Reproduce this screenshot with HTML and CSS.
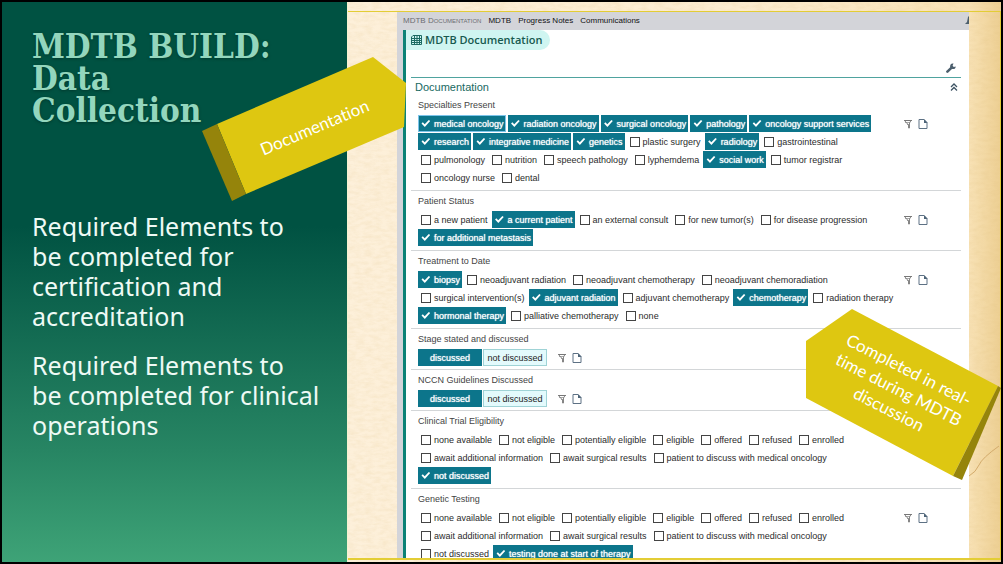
FILE: index.html
```html
<!DOCTYPE html>
<html lang="en">
<head>
<meta charset="utf-8">
<meta name="viewport" content="width=device-width, initial-scale=1">
<title>MDTB Build: Data Collection</title>
<link rel="stylesheet" href="styles.css">
</head>
<body>
<svg class="sprite" aria-hidden="true">
  <symbol id="funnel" viewBox="0 0 10 10"><path d="M1 1.500h8" stroke="#777" fill="none"/><path d="M2 3.500h5M4 5.500h3" stroke="#aaa" fill="none"/><path d="M1.500 1.500l4 4.500v3h1V4L8 1.500" fill="none" stroke="#858585"/></symbol>
  <symbol id="page" viewBox="0 0 10 10"><path d="M1 .5h5l3 3v6H1z" fill="#fff" stroke="#5d7184"/><path d="M6 0v4h3.500z" fill="#4d6478"/></symbol>
  <symbol id="wrench" viewBox="0 0 10 10"><path d="M1.400 8.600L5.600 4.600" stroke="#4c5f6d" stroke-width="2.600" stroke-linecap="round"/><path d="M7.500.5A2.800 2.800 0 1 0 9.700 3.400L7.800 4 6.600 2.700z" fill="#4c5f6d"/></symbol>
</svg>
<main class="slide">
  <section class="intro">
    <h1 class="title">MDTB BUILD:<br>Data<br>Collection</h1>
    <div class="points">
      <p>Required Elements to<br>be completed for<br>certification and<br>accreditation</p>
      <p>Required Elements to<br>be completed for clinical<br>operations</p>
    </div>
  </section>

  <section class="paper">
    <svg class="grain" aria-hidden="true"><filter id="fibre"><feTurbulence type="fractalNoise" baseFrequency=".12 .3" numOctaves="3" seed="4"/><feColorMatrix values="0 0 0 0 .7  0 0 0 0 .48  0 0 0 0 .18  .9 0 0 0 -.3"/></filter><rect width="100%" height="100%" filter="url(#fibre)"/></svg>
    <svg class="crease" viewBox="0 0 32 40" aria-hidden="true"><path d="M1 32Q8 28 11 21T31 2" fill="none" stroke="#d3ab6c"/></svg>
    <div class="frame">
      <div class="app">
        <nav class="tabs">
          <span class="crumb">MDTB Documentation</span>
          <a href="#mdtb">MDTB</a>
          <a href="#notes">Progress Notes</a>
          <a href="#comms">Communications</a>
          <svg class="tabs-tool" viewBox="0 0 4 9" aria-hidden="true"><path d="M4 0v8H0l2-2 1-5z" fill="#4c5f6d"/></svg>
        </nav>
        <div class="sheet">
          <h2 class="pill"><svg viewBox="0 0 11 10" aria-hidden="true"><path d="M2 .5h8.500v9H.5V2zM.5 3.500h10M.5 5.500h10M.5 7.500h10M3.500.5v9M6 .5v9M8.500.5v9" fill="none" stroke="#1c6a62"/></svg>MDTB Documentation</h2>
          <div class="toolbar"><svg class="icon" aria-hidden="true"><use href="#wrench"/></svg></div>
          <div class="form">
            <header class="form-head"><h3>Documentation</h3><svg class="fold" viewBox="0 0 8 8" aria-hidden="true"><path d="M1 4l3-3 3 3M1 7.500l3-3 3 3" fill="none" stroke="#3d5363" stroke-width="1.300"/></svg></header>

            <fieldset class="group"><legend>Specialties Present</legend>
              <div class="row"><div class="options">
                <label class="opt focus"><input type="checkbox" checked>medical oncology</label>
                <label class="opt"><input type="checkbox" checked>radiation oncology</label>
                <label class="opt"><input type="checkbox" checked>surgical oncology</label>
                <label class="opt"><input type="checkbox" checked>pathology</label>
                <label class="opt"><input type="checkbox" checked>oncology support services</label>
                <label class="opt"><input type="checkbox" checked>research</label>
                <label class="opt"><input type="checkbox" checked>integrative medicine</label>
                <label class="opt"><input type="checkbox" checked>genetics</label>
                <label class="opt"><input type="checkbox">plastic surgery</label>
                <label class="opt"><input type="checkbox" checked>radiology</label>
                <label class="opt"><input type="checkbox">gastrointestinal</label>
                <label class="opt"><input type="checkbox">pulmonology</label>
                <label class="opt"><input type="checkbox">nutrition</label>
                <label class="opt"><input type="checkbox">speech pathology</label>
                <label class="opt"><input type="checkbox">lyphemdema</label>
                <label class="opt"><input type="checkbox" checked>social work</label>
                <label class="opt"><input type="checkbox">tumor registrar</label>
                <label class="opt"><input type="checkbox">oncology nurse</label>
                <label class="opt"><input type="checkbox">dental</label>
              </div><div class="tools"><svg class="icon" aria-hidden="true"><use href="#funnel"/></svg><svg class="icon" aria-hidden="true"><use href="#page"/></svg></div></div>
            </fieldset>

            <fieldset class="group"><legend>Patient Status</legend>
              <div class="row"><div class="options">
                <label class="opt"><input type="checkbox">a new patient</label>
                <label class="opt"><input type="checkbox" checked>a current patient</label>
                <label class="opt"><input type="checkbox">an external consult</label>
                <label class="opt"><input type="checkbox">for new tumor(s)</label>
                <label class="opt"><input type="checkbox">for disease progression</label>
                <label class="opt"><input type="checkbox" checked>for additional metastasis</label>
              </div><div class="tools"><svg class="icon" aria-hidden="true"><use href="#funnel"/></svg><svg class="icon" aria-hidden="true"><use href="#page"/></svg></div></div>
            </fieldset>

            <fieldset class="group"><legend>Treatment to Date</legend>
              <div class="row"><div class="options">
                <label class="opt"><input type="checkbox" checked>biopsy</label>
                <label class="opt"><input type="checkbox">neoadjuvant radiation</label>
                <label class="opt"><input type="checkbox">neoadjuvant chemotherapy</label>
                <label class="opt"><input type="checkbox">neoadjuvant chemoradiation</label>
                <label class="opt"><input type="checkbox">surgical intervention(s)</label>
                <label class="opt"><input type="checkbox" checked>adjuvant radiation</label>
                <label class="opt"><input type="checkbox">adjuvant chemotherapy</label>
                <label class="opt"><input type="checkbox" checked>chemotherapy</label>
                <label class="opt"><input type="checkbox">radiation therapy</label>
                <label class="opt"><input type="checkbox" checked>hormonal therapy</label>
                <label class="opt"><input type="checkbox">palliative chemotherapy</label>
                <label class="opt"><input type="checkbox">none</label>
              </div><div class="tools"><svg class="icon" aria-hidden="true"><use href="#funnel"/></svg><svg class="icon" aria-hidden="true"><use href="#page"/></svg></div></div>
            </fieldset>

            <fieldset class="group compact"><legend>Stage stated and discussed</legend>
              <div class="choice"><button type="button" class="toggle on" aria-pressed="true">discussed</button><button type="button" class="toggle" aria-pressed="false">not discussed</button><div class="tools"><svg class="icon" aria-hidden="true"><use href="#funnel"/></svg><svg class="icon" aria-hidden="true"><use href="#page"/></svg></div></div>
            </fieldset>

            <fieldset class="group compact"><legend>NCCN Guidelines Discussed</legend>
              <div class="choice"><button type="button" class="toggle on" aria-pressed="true">discussed</button><button type="button" class="toggle" aria-pressed="false">not discussed</button><div class="tools"><svg class="icon" aria-hidden="true"><use href="#funnel"/></svg><svg class="icon" aria-hidden="true"><use href="#page"/></svg></div></div>
            </fieldset>

            <fieldset class="group"><legend>Clinical Trial Eligibility</legend>
              <div class="row"><div class="options">
                <label class="opt"><input type="checkbox">none available</label>
                <label class="opt"><input type="checkbox">not eligible</label>
                <label class="opt"><input type="checkbox">potentially eligible</label>
                <label class="opt"><input type="checkbox">eligible</label>
                <label class="opt"><input type="checkbox">offered</label>
                <label class="opt"><input type="checkbox">refused</label>
                <label class="opt"><input type="checkbox">enrolled</label>
                <label class="opt"><input type="checkbox">await additional information</label>
                <label class="opt"><input type="checkbox">await surgical results</label>
                <label class="opt"><input type="checkbox">patient to discuss with medical oncology</label>
                <label class="opt"><input type="checkbox" checked>not discussed</label>
              </div></div>
            </fieldset>

            <fieldset class="group"><legend>Genetic Testing</legend>
              <div class="row"><div class="options">
                <label class="opt"><input type="checkbox">none available</label>
                <label class="opt"><input type="checkbox">not eligible</label>
                <label class="opt"><input type="checkbox">potentially eligible</label>
                <label class="opt"><input type="checkbox">eligible</label>
                <label class="opt"><input type="checkbox">offered</label>
                <label class="opt"><input type="checkbox">refused</label>
                <label class="opt"><input type="checkbox">enrolled</label>
                <label class="opt"><input type="checkbox">await additional information</label>
                <label class="opt"><input type="checkbox">await surgical results</label>
                <label class="opt"><input type="checkbox">patient to discuss with medical oncology</label>
                <label class="opt"><input type="checkbox">not discussed</label>
                <label class="opt"><input type="checkbox" checked>testing done at start of therapy</label>
              </div><div class="tools"><svg class="icon" aria-hidden="true"><use href="#funnel"/></svg><svg class="icon" aria-hidden="true"><use href="#page"/></svg></div></div>
            </fieldset>
          </div>
        </div>
      </div>
    </div>
  </section>

  <svg class="callout callout-doc" viewBox="0 0 206 146">
    <path d="M15 68L171 1l33 26-2 44L44 138z" fill="#dec711"/>
    <path d="M0 75l15-7 29 70-14 7z" fill="#95840b"/>
    <text x="115" y="77" transform="rotate(-23 115 77)">Documentation</text>
  </svg>
  <svg class="callout callout-live" viewBox="0 0 196 172">
    <path d="M1 32L47 0l146 77-45 90L1 89z" fill="#dec711"/>
    <path d="M193 77l3 2-39 92-9-4z" fill="#95840b"/>
    <g transform="rotate(27 91 86)"><text x="91" y="64">Completed in real-</text><text x="91" y="86">time during MDTB</text><text x="91" y="108">discussion</text></g>
  </svg>
</main>
</body>
</html>
```
FILE: styles.css
```css
* { box-sizing: border-box; }

body {
  margin: 0;
  font-family: "Liberation Sans", Arial, sans-serif;
  font-size: 9px;
  color: #2b2b2b;
}

h1, h2, h3, p { margin: 0; }

.sprite { display: none; }

.slide {
  position: relative;
  display: grid;
  grid-template-columns: 345px minmax(0, 1fr);
  grid-template-rows: minmax(0, 1fr);
  height: 100vh;
  border: 2px solid #000;
  overflow: hidden;
}

.intro {
  padding: 29px 16px 0 30px;
  background: linear-gradient(#005242 0, #005242 40%, #278563 80%, #3ea377 100%);
}

.title {
  font: bold 33px/32px "DejaVu Serif Condensed", "DejaVu Serif", serif;
  color: #93d6bd;
  text-shadow: 0 1px 3px #003a2e;
}

.points {
  display: grid;
  gap: 19px;
  padding-top: 84px;
  font: 25px/30px "Noto Sans", sans-serif;
  color: #eefaf5;
}

.paper {
  position: relative;
  padding: 9px 0 2px;
  border-left: 1px solid #f5f2d0;
  background: linear-gradient(90deg, #fdf0da 0, #fcecd0 60%, #f8e2b6 95%, #edcf92 100%);
}

.grain {
  position: absolute;
  inset: 0;
  width: 100%;
  height: 100%;
  opacity: .3;
}

.crease {
  position: absolute;
  right: 1px;
  bottom: 78px;
  width: 32px;
  height: 40px;
}

.frame {
  position: relative;
  height: 100%;
  padding: 0 31px 0 49px;
  border: solid #e3cd35;
  border-width: 1px 1px 2px 0;
}

.app {
  display: flex;
  flex-direction: column;
  height: 100%;
  padding-left: 6px;
  background: #d3d4d9;
  overflow: hidden;
}

.tabs {
  display: flex;
  flex: none;
  align-items: center;
  gap: 7px;
  height: 18px;
  padding-bottom: 2px;
  font-size: 8px;
}

.tabs a { color: #111; text-decoration: none; }
.crumb { font-variant: small-caps; color: #6b6d72; }
.tabs-tool { width: 4px; height: 9px; margin-left: auto; }

.sheet {
  flex: 1;
  min-height: 0;
  padding-right: 8px;
  border-left: 3px solid #0b8276;
  background: #fff;
}

.pill {
  display: flex;
  align-items: center;
  gap: 3px;
  width: fit-content;
  height: 20px;
  padding: 0 8px 0 5px;
  border-radius: 0 10px 10px 0;
  background: #cff5f1;
  font: 600 11px/20px "Open Sans", sans-serif;
  color: #17594f;
}

.pill svg { width: 11px; height: 10px; }

.toolbar {
  display: flex;
  justify-content: flex-end;
  align-items: flex-end;
  height: 27px;
  padding: 0 5px 4px 0;
}

.icon { width: 10px; height: 10px; }

.form { margin-left: 5px; border-top: 1px solid #4fa39f; }

.form-head {
  display: flex;
  justify-content: space-between;
  align-items: center;
  height: 17px;
  padding: 0 3px 0 4px;
}

.form-head h3 { font-size: 11px; font-weight: normal; color: #17695f; }
.fold { width: 8px; height: 8px; }

.group {
  min-width: 0;
  margin: 0;
  padding: 0 0 4px 7px;
  border: 0;
  border-bottom: 1px solid #d3d6d8;
}

.group.compact { padding-bottom: 3px; }

.group legend { padding: 0; line-height: 20px; color: #444; }

.row {
  display: grid;
  grid-template-columns: minmax(0, 480px) auto;
  justify-content: start;
  gap: 5px;
}

.options { display: flex; flex-wrap: wrap; gap: 1px 2px; }

.opt {
  display: flex;
  align-items: center;
  gap: 3px;
  height: 17px;
  padding: 0 2px 0 3px;
  white-space: nowrap;
}

.opt input {
  appearance: none;
  width: 10px;
  height: 10px;
  margin: 0;
  border: 1px solid #444;
  background: #fff;
}

.opt:has(:checked) {
  background: #0c758b;
  color: #fff;
  text-shadow: 0 0 1px #fff;
}

.opt input:checked { border: 0; background: #fff; clip-path: polygon(5% 50%, 18% 38%, 37% 58%, 78% 14%, 92% 26%, 38% 85%); }

.focus { outline: 1px solid #7cc4ea; outline-offset: -1px; }

.tools { display: flex; align-items: center; gap: 5px; height: 17px; }

.choice { display: flex; gap: 1px; }
.choice .tools { margin-left: 9px; }

.toggle {
  width: 64px;
  height: 17px;
  padding: 0;
  border: 1px solid #9fd3d6;
  background: #e3fafc;
  font: inherit;
  color: #222;
}

.toggle.on {
  border-color: #0c758b;
  background: #0c758b;
  color: #fff;
  text-shadow: 0 0 1px #fff;
}

.callout {
  position: absolute;
  overflow: visible;
  font: 17px Lato, sans-serif;
  font-variant-ligatures: none;
}

.callout text { fill: #fff; text-anchor: middle; }
.callout-doc { left: 200px; top: 54px; width: 206px; height: 146px; }
.callout-live { right: 0; top: 307px; width: 196px; height: 172px; }
```
